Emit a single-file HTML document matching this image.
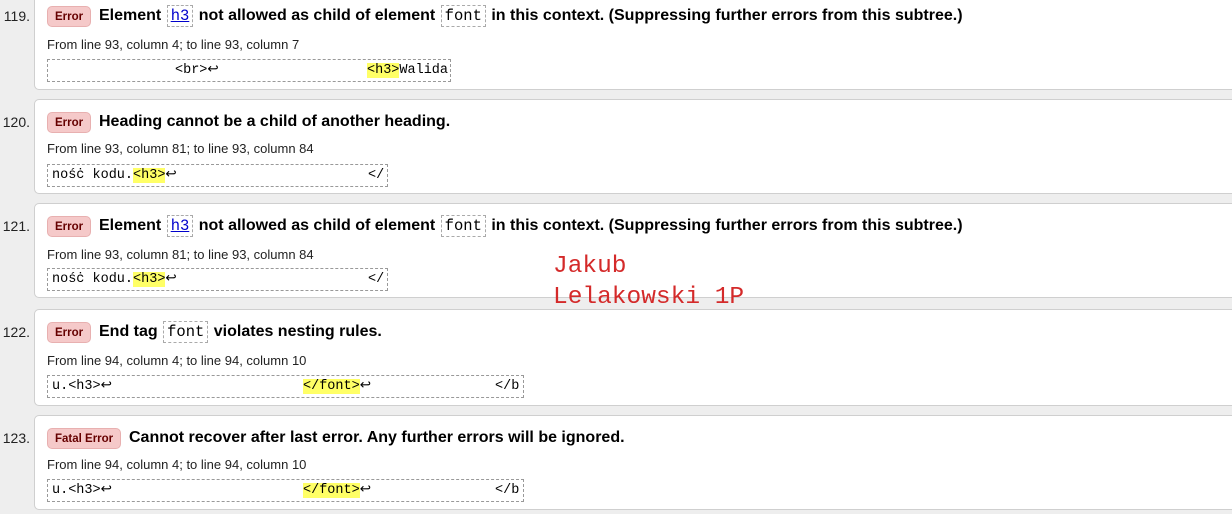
<!DOCTYPE html>
<html><head><meta charset="utf-8"><style>
*{margin:0;padding:0;box-sizing:border-box}
body{width:1232px;height:514px;background:#eeeeee;position:relative;overflow:hidden;font-family:"Liberation Sans",Arial,sans-serif;color:#000}
.card{position:absolute;left:34px;width:1210px;background:#fff;border:1px solid #cfcfcf;border-radius:5px;height:95px}
.num{position:absolute;left:0;width:30px;text-align:right;font-size:14px;color:#222}
.badge{position:absolute;left:47px;height:21px;line-height:21px;padding:0 7px;background:#f5c9c9;border:1px solid #e8b0b0;border-radius:5px;font-size:11.5px;font-weight:bold;color:#600;}
.title{position:absolute;left:99px;font-size:16px;font-weight:bold;white-space:nowrap;line-height:20px}
.c{font-family:"Liberation Mono",monospace;font-weight:normal;font-size:15.5px;border:1px dashed #aaa;padding:1px 3px;margin:0 1px}
.c a{color:#00c;text-decoration:underline}
.from{position:absolute;left:47px;font-size:13px;color:#222;white-space:nowrap}
.code{position:absolute;left:47px;height:23px;border:1px dashed #999;font-family:"Liberation Mono",monospace;font-size:13.5px}
.code span{position:absolute;top:3px;white-space:pre;line-height:16px;height:16px;display:block}
.hl{background:#ff6;}
.name{position:absolute;left:553px;top:251px;font-family:"Liberation Mono",monospace;font-size:24.5px;color:#d42a2a;line-height:31px}
</style></head><body>

<div class="card" style="top:-7px;height:97px"></div>
<div class="card" style="top:99px"></div>
<div class="card" style="top:203px"></div>
<div class="card" style="top:309px;height:97px"></div>
<div class="card" style="top:415px"></div>

<div class="num" style="top:8px">119.</div>
<div class="badge" style="top:6px">Error</div>
<div class="title" style="top:6px">Element <span class="c"><a>h3</a></span> not allowed as child of element <span class="c">font</span> in this context. (Suppressing further errors from this subtree.)</div>
<div class="from" style="top:37px">From line 93, column 4; to line 93, column 7</div>
<div class="code" style="top:59px;width:404px"><span style="left:127px">&lt;br&gt;↩</span><span style="left:319px"><b class="hl" style="font-weight:normal">&lt;h3&gt;</b>Walida</span></div>

<div class="num" style="top:114px">120.</div>
<div class="badge" style="top:112px">Error</div>
<div class="title" style="top:112px">Heading cannot be a child of another heading.</div>
<div class="from" style="top:141px">From line 93, column 81; to line 93, column 84</div>
<div class="code" style="top:164px;width:341px"><span style="left:4px">nośċ kodu.<b class="hl" style="font-weight:normal">&lt;h3&gt;</b>↩</span><span style="left:320px">&lt;/</span></div>

<div class="num" style="top:218px">121.</div>
<div class="badge" style="top:216px">Error</div>
<div class="title" style="top:216px">Element <span class="c"><a>h3</a></span> not allowed as child of element <span class="c">font</span> in this context. (Suppressing further errors from this subtree.)</div>
<div class="from" style="top:247px">From line 93, column 81; to line 93, column 84</div>
<div class="code" style="top:268px;width:341px"><span style="left:4px">nośċ kodu.<b class="hl" style="font-weight:normal">&lt;h3&gt;</b>↩</span><span style="left:320px">&lt;/</span></div>

<div class="name">Jakub<br>Lelakowski 1P</div>

<div class="num" style="top:324px">122.</div>
<div class="badge" style="top:322px">Error</div>
<div class="title" style="top:322px">End tag <span class="c">font</span> violates nesting rules.</div>
<div class="from" style="top:353px">From line 94, column 4; to line 94, column 10</div>
<div class="code" style="top:375px;width:477px"><span style="left:4px">u.&lt;h3&gt;↩</span><span style="left:255px"><b class="hl" style="font-weight:normal">&lt;/font&gt;</b>↩</span><span style="left:447px">&lt;/b</span></div>

<div class="num" style="top:430px">123.</div>
<div class="badge" style="top:428px">Fatal Error</div>
<div class="title" style="top:428px;left:129px">Cannot recover after last error. Any further errors will be ignored.</div>
<div class="from" style="top:457px">From line 94, column 4; to line 94, column 10</div>
<div class="code" style="top:479px;width:477px"><span style="left:4px">u.&lt;h3&gt;↩</span><span style="left:255px"><b class="hl" style="font-weight:normal">&lt;/font&gt;</b>↩</span><span style="left:447px">&lt;/b</span></div>

</body></html>
